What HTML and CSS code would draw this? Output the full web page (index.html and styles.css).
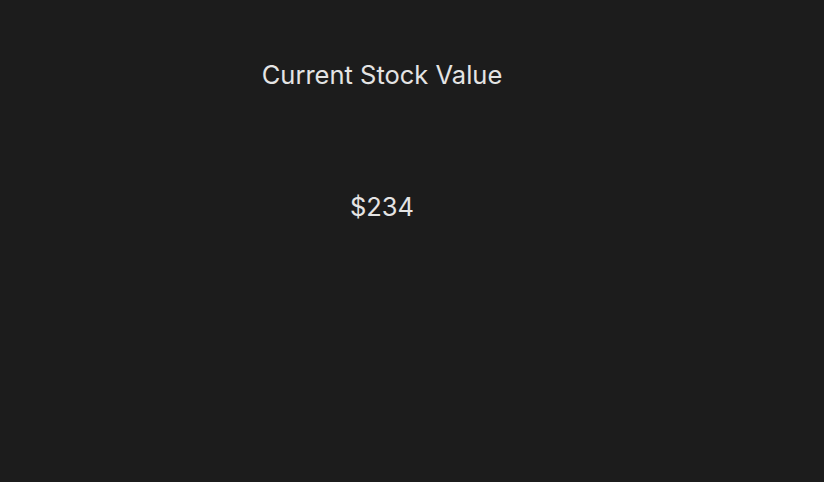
FILE: index.html
```html
<!DOCTYPE html>
<html lang="en">
<head>
  <meta charset="UTF-8">
  <meta name="viewport" content="width=device-width, initial-scale=1.0">
  <title>Current Stock Value</title>
  <link rel="stylesheet" href="styles.css">
</head>
<body>
  <!-- Stock value card -->
  <div class="stock-panel">
    <h1 class="stock-title">Current Stock Value</h1>
    <div class="stock-value">$234</div>
  </div>
</body>
</html>
```

FILE: styles.css
```css
/* General Styles */
body, html {
  margin: 0;
  padding: 0;
  height: 100%;
  font-family: Inter, "Noto Sans", sans-serif;
  background-color: #1c1c1c;
  color: #e4e4e4;
  overflow: hidden;
}

.stock-panel {
  width: 764px;
  display: flex;
  flex-direction: column;
  align-items: center;
  padding-top: 60px;
  gap: 102px;
}

.stock-title {
  margin: 0;
  font-size: 25.5px;
  line-height: 30px;
  font-weight: 400;
}

.stock-value {
  font-size: 25.5px;
  line-height: 30px;
}
```
